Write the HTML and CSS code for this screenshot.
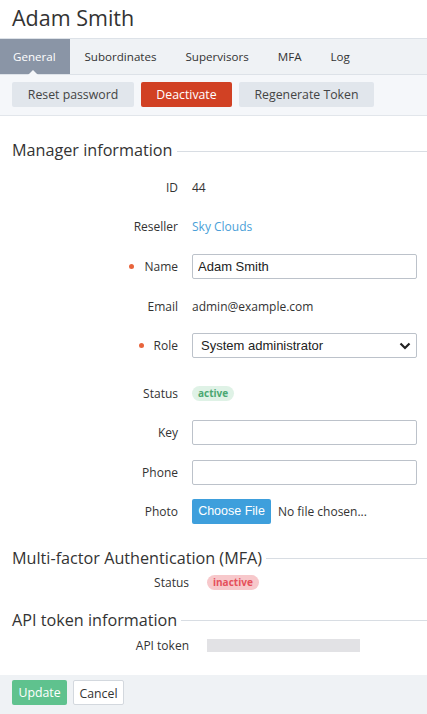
FILE: index.html
```html
<!DOCTYPE html>
<html>
<head>
<meta charset="utf-8">
<link rel="stylesheet" href="styles.css">
</head>
<body>
<h1 class="title">Adam Smith</h1>
<nav class="tabs">
  <span class="tab active">General</span>
  <span class="tab">Subordinates</span>
  <span class="tab">Supervisors</span>
  <span class="tab">MFA</span>
  <span class="tab">Log</span>
</nav>
<div class="toolbar">
  <button class="btn btn-grey b-reset">Reset password</button>
  <button class="btn btn-red">Deactivate</button>
  <button class="btn btn-grey b-regen">Regenerate Token</button>
</div>
<section class="section">
  <div class="legend"><span>Manager information</span><i></i></div>
  <div class="rows">
    <div class="row"><label class="lbl">ID</label><div class="val">44</div></div>
    <div class="row"><label class="lbl">Reseller</label><div class="val link">Sky Clouds</div></div>
    <div class="row"><label class="lbl req">Name</label><div class="val"><input class="inp" value="Adam Smith"></div></div>
    <div class="row"><label class="lbl">Email</label><div class="val">admin@example.com</div></div>
    <div class="row"><label class="lbl req">Role</label><div class="val"><div class="sel"><span>System administrator</span><svg width="12" height="8" viewBox="0 0 12 8"><path d="M1.5 1.5 L6 6 L10.5 1.5" fill="none" stroke="#222" stroke-width="2.2"/></svg></div></div></div>
    <div class="row row-status"><label class="lbl">Status</label><div class="val"><span class="badge badge-green">active</span></div></div>
    <div class="row"><label class="lbl">Key</label><div class="val"><input class="inp" value=""></div></div>
    <div class="row"><label class="lbl">Phone</label><div class="val"><input class="inp" value=""></div></div>
    <div class="row"><label class="lbl">Photo</label><div class="val"><span class="file-btn">Choose File</span><span class="file-text">No file chosen...</span></div></div>
  </div>
</section>
<section class="section sec2">
  <div class="legend"><span>Multi-factor Authentication (MFA)</span><i></i></div>
  <div class="row row2"><label class="lbl">Status</label><div class="val"><span class="badge badge-red">inactive</span></div></div>
</section>
<section class="section sec3">
  <div class="legend"><span>API token information</span><i></i></div>
  <div class="row row2"><label class="lbl">API token</label><div class="val"><span class="token"></span></div></div>
</section>
<footer class="footer">
  <button class="btn btn-green">Update</button>
  <button class="btn btn-white">Cancel</button>
</footer>
</body>
</html>
```
FILE: styles.css
```css
* { box-sizing: border-box; }
html, body { margin: 0; padding: 0; }
body {
  width: 427px;
  height: 714px;
  font-family: "Open Sans", "Noto Sans", sans-serif;
  font-size: 12px;
  color: #333;
  background: #fff;
  overflow: hidden;
  position: relative;
}
.title {
  margin: 0;
  padding: 4px 12px 0;
  height: 38px;
  font-size: 21.5px;
  font-weight: 400;
  line-height: 28px;
  color: #333;
}
.tabs {
  display: flex;
  height: 37px;
  background: #eff2f5;
  border-top: 1px solid #dde2e8;
  border-bottom: 1px solid #dde2e8;
}
.tab {
  position: relative;
  padding: 0 14.5px;
  line-height: 35px;
  font-size: 11.6px;
  color: #333;
  white-space: nowrap;
}
.tab.active {
  background: #8a95a6;
  color: #fff;
  width: 70px;
  padding: 0 13px;
}
.tab.active::after {
  content: "";
  position: absolute;
  left: 28px;
  bottom: -1px;
  border-left: 5px solid transparent;
  border-right: 5px solid transparent;
  border-bottom: 5px solid #f5f7fa;
}
.toolbar {
  display: flex;
  gap: 7px;
  height: 41px;
  padding: 7px 12px 0;
  background: #f5f7fa;
  border-bottom: 1px solid #e2e6eb;
}
.btn {
  height: 25px;
  border: none;
  border-radius: 2px;
  font-family: "Open Sans", "Noto Sans", sans-serif;
  font-size: 12.3px;
  padding: 0;
  line-height: 25px;
  white-space: nowrap;
  text-align: center;
}
.btn-grey { background: #e1e6ec; color: #444; }
.b-reset { width: 122px; }
.btn-red { background: #d14124; color: #fff; width: 91px; }
.b-regen { width: 135px; }
.section { padding: 0 0 0 12px; }
.legend {
  display: flex;
  align-items: center;
  margin-top: 22px;
  height: 24px;
}
.legend span {
  font-size: 16.2px;
  color: #333;
  white-space: nowrap;
  padding-right: 4px;
}
.legend i {
  flex: 1;
  height: 1px;
  background: #d8dde3;
  margin-top: 2px;
}
.rows {
  display: flex;
  flex-direction: column;
  margin-top: 13px;
}
.row {
  display: flex;
  align-items: center;
  height: 24px;
  margin-bottom: 15.7px;
}
.row-status { margin-top: 8px; margin-bottom: 15px; }
.lbl {
  width: 166px;
  text-align: right;
  font-size: 12px;
  color: #333;
  position: relative;
}
.lbl.req::before {
  content: "";
  position: absolute;
  width: 5px;
  height: 5px;
  border-radius: 50%;
  background: #e8643c;
  margin-left: -15px;
  top: 6px;
}
.val {
  margin-left: 14px;
  flex: 1;
  display: flex;
  align-items: center;
  font-size: 12px;
  padding-right: 10px;
}
.link { color: #4a9fd8; }
.inp {
  width: 225px;
  height: 25px;
  border: 1px solid #bcc2ca;
  border-radius: 2px;
  padding: 0 5px;
  font-family: "Liberation Sans", Arial, sans-serif;
  font-size: 13px;
  color: #222;
  outline: none;
}
.sel {
  width: 225px;
  height: 25px;
  border: 1px solid #bcc2ca;
  border-radius: 2px;
  padding: 0 5px 0 8px;
  display: flex;
  align-items: center;
  justify-content: space-between;
  font-family: "Liberation Sans", Arial, sans-serif;
  font-size: 13px;
  color: #222;
}
.badge {
  display: inline-block;
  height: 15px;
  line-height: 15px;
  padding: 0 6px;
  border-radius: 8px;
  font-size: 10px;
  font-weight: 700;
}
.badge-green { background: #dff2e6; color: #4aa872; }
.badge-red { background: #f7c8cb; color: #e5505b; }
.file-btn {
  display: inline-block;
  width: 79px;
  height: 25px;
  line-height: 25px;
  text-align: center;
  background: #3e9fdc;
  color: #fff;
  border-radius: 2px;
  font-family: "Liberation Sans", Arial, sans-serif;
  font-size: 12.5px;
}
.file-text { margin-left: 7px; font-size: 12px; color: #333; }
.sec2 .legend { margin-top: 6px; }
.row2 { height: 20px; margin-bottom: 0; }
.row2 .lbl { width: 177px; }
.row2 .val { margin-left: 18px; }
.sec2 .row2 { margin-top: 3px; }
.sec3 .legend { margin-top: 15px; }
.sec3 .row2 { margin-top: 4px; }
.token {
  display: inline-block;
  width: 153px;
  height: 13px;
  background: #e2e2e5;
}
.footer {
  position: absolute;
  left: 0;
  top: 675px;
  width: 427px;
  height: 39px;
  background: #eff2f5;
  display: flex;
  gap: 6px;
  padding: 5px 12px 0;
}
.btn-green { background: #5fc28e; color: #fff; width: 55px; }
.btn-white { background: #fff; color: #333; border: 1px solid #d3d8de; width: 51px; }
```
